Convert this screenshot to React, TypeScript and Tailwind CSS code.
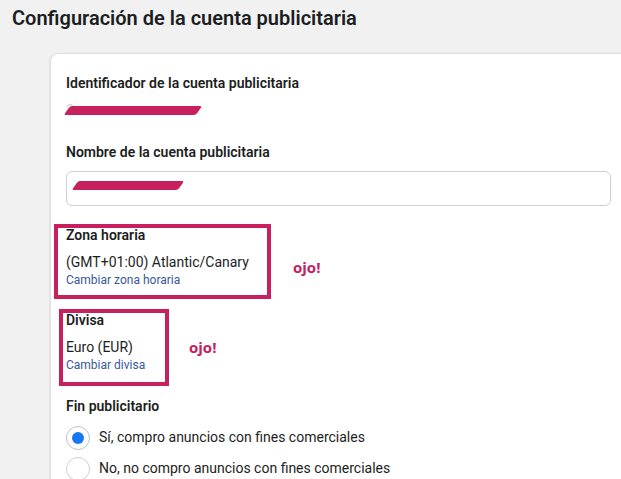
import React from "react";

const font = { fontFamily: "Roboto, 'Liberation Sans', sans-serif" };
const ojoFont = { fontFamily: "'Open Sans', sans-serif" };

function Redaction({ className }: { className: string }) {
  // Pink marker stroke hiding private data.
  return (
    <span
      className={`absolute block h-[9px] -skew-x-[35deg] rounded-[2px] bg-[#c8205e] ${className}`}
    />
  );
}

function Label({ children }: { children: React.ReactNode }) {
  return (
    <div className="text-[14px] font-semibold leading-[18px] text-[#1c1e21]">{children}</div>
  );
}

function Radio({ checked, label }: { checked?: boolean; label: string }) {
  return (
    <label className="flex h-[31px] items-center gap-[9px]">
      <span
        className={`flex h-[24px] w-[24px] items-center justify-center rounded-full border bg-white ${
          checked ? "border-[#bec3c9]" : "border-[#ccd0d5]"
        }`}
      >
        {checked && <span className="h-[12px] w-[12px] rounded-full bg-[#1877f2]" />}
      </span>
      <span className="text-[14px] text-[#1c1e21]">{label}</span>
    </label>
  );
}

function Setting({ label, value, link }: { label: string; value: string; link: string }) {
  return (
    <div className="flex flex-col">
      <Label>{label}</Label>
      <div className="mt-[9px] text-[14px] leading-[18px] text-[#1c1e21]">{value}</div>
      <div className="mt-[2px] text-[12px] leading-[15px] text-[#385898]">{link}</div>
    </div>
  );
}

export default function App() {
  return (
    <div className="flex h-[479px] w-[621px] flex-col overflow-hidden bg-[#f1f1f1]" style={font}>
      <h1 className="pl-[12px] pt-[5px] text-[20px] font-semibold leading-[26px] text-[#1c1e21]">
        Configuración de la cuenta publicitaria
      </h1>

      <div className="relative ml-[50px] mt-[22px] flex w-[620px] flex-col gap-[20px] rounded-tl-[8px] border border-[#dddfe2] bg-white pb-6 pl-[15px] pr-[26px] pt-[20px] shadow-sm">
        {/* Identificador */}
        <div className="flex flex-col gap-[9px]">
          <Label>Identificador de la cuenta publicitaria</Label>
          <div className="relative h-[18px] text-[14px] leading-[18px] text-[#606770]">
            <span className="opacity-30">2</span>
            <Redaction className="left-[1px] top-[5px] w-[132px]" />
          </div>
        </div>

        {/* Nombre */}
        <div className="mt-[4px] flex flex-col gap-[10px]">
          <Label>Nombre de la cuenta publicitaria</Label>
          <div className="relative h-[35px] w-[545px] rounded-[6px] border border-[#ccd0d5] bg-white">
            <Redaction className="left-[8px] top-[9px] w-[106px]" />
          </div>
        </div>

        <div className="flex flex-col gap-[23px]">
          <Setting
            label="Zona horaria"
            value="(GMT+01:00) Atlantic/Canary"
            link="Cambiar zona horaria"
          />
          <Setting label="Divisa" value="Euro (EUR)" link="Cambiar divisa" />
        </div>

        {/* Fin publicitario */}
        <div className="mt-[4px] flex flex-col gap-[7px]">
          <Label>Fin publicitario</Label>
          <div className="flex flex-col">
            <Radio checked label="Sí, compro anuncios con fines comerciales" />
            <Radio label="No, no compro anuncios con fines comerciales" />
          </div>
        </div>

        {/* Annotation boxes drawn over the screenshot */}
        <div className="pointer-events-none absolute left-[3px] top-[170px] h-[75px] w-[217px] border-[4px] border-[#c8205e]" />
        <div className="pointer-events-none absolute left-[8px] top-[255px] h-[77px] w-[110px] border-[4px] border-[#c8205e]" />
        <span className="absolute left-[242px] top-[202px] text-[15px] font-bold text-[#c8205e]" style={ojoFont}>
          ojo!
        </span>
        <span className="absolute left-[138px] top-[282px] text-[15px] font-bold text-[#c8205e]" style={ojoFont}>
          ojo!
        </span>
      </div>
    </div>
  );
}
